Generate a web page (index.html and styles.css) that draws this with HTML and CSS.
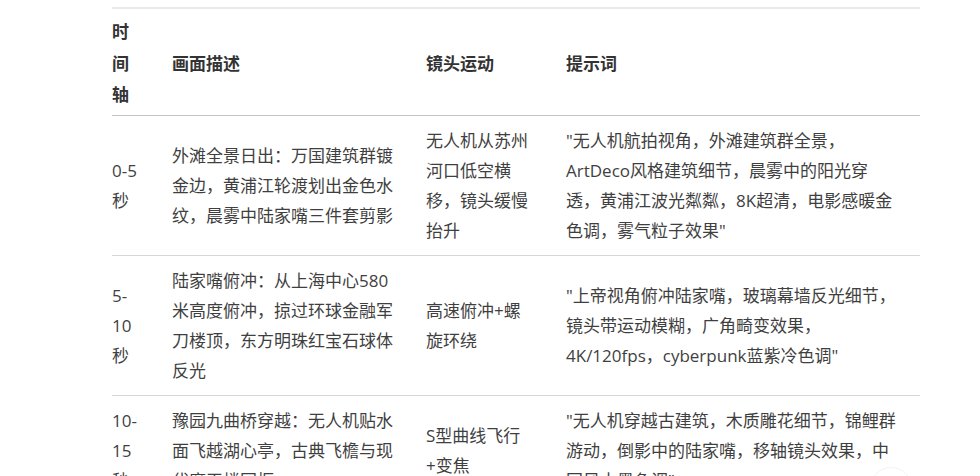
FILE: index.html
```html
<!DOCTYPE html>
<html lang="zh-CN">
<head>
  <meta charset="UTF-8">
  <meta name="viewport" content="width=device-width, initial-scale=1.0">
  <title>分镜脚本</title>
  <link rel="stylesheet" href="styles.css">
</head>
<body>
  <div class="page">
    <table class="shots">
      <thead>
        <tr>
          <th class="col-time">时间轴</th>
          <th class="col-desc">画面描述</th>
          <th class="col-cam">镜头运动</th>
          <th class="col-prompt">提示词</th>
        </tr>
      </thead>
      <tbody>
        <tr>
          <td class="col-time">0-5秒</td>
          <td class="col-desc">外滩全景日出：万国建筑群镀金边，黄浦江轮渡划出金色水纹，晨雾中陆家嘴三件套剪影</td>
          <td class="col-cam">无人机从苏州河口低空横移，镜头缓慢抬升</td>
          <td class="col-prompt">"无人机航拍视角，外滩建筑群全景，ArtDeco风格建筑细节，晨雾中的阳光穿透，黄浦江波光粼粼，8K超清，电影感暖金色调，雾气粒子效果"</td>
        </tr>
        <tr>
          <td class="col-time">5-10秒</td>
          <td class="col-desc">陆家嘴俯冲：从上海中心580米高度俯冲，掠过环球金融军刀楼顶，东方明珠红宝石球体反光</td>
          <td class="col-cam">高速俯冲+螺旋环绕</td>
          <td class="col-prompt">"上帝视角俯冲陆家嘴，玻璃幕墙反光细节，镜头带运动模糊，广角畸变效果，4K/120fps，cyberpunk蓝紫冷色调"</td>
        </tr>
        <tr>
          <td class="col-time">10-15秒</td>
          <td class="col-desc">豫园九曲桥穿越：无人机贴水面飞越湖心亭，古典飞檐与现代摩天楼同框</td>
          <td class="col-cam">S型曲线飞行+变焦</td>
          <td class="col-prompt">"无人机穿越古建筑，木质雕花细节，锦鲤群游动，倒影中的陆家嘴，移轴镜头效果，中国风水墨色调"</td>
        </tr>
      </tbody>
    </table>
  </div>
  <div class="float-btn"></div>
</body>
</html>
```

FILE: styles.css
```css
body {
  margin: 0;
  background: #fff;
  color: #3f3f3f;
  font-family: "Open Sans", "Noto Sans CJK SC", sans-serif;
  overflow: hidden;
}

.page {
  padding: 7px 0 0 112px;
}

.shots {
  width: 808px;
  border-collapse: collapse;
  table-layout: fixed;
  border-top: 2px solid #e9e9e9;
  font-size: 17px;
  line-height: 30px;
}

.shots th {
  text-align: left;
  font-weight: bold;
  color: #333;
  line-height: 31.5px;
  padding: 7px 13px 4px;
  border-bottom: 1px solid #c4c4c4;
}

.shots td {
  padding: 10px 13px 9px;
  vertical-align: middle;
  border-bottom: 1px solid #d6d6d6;
}

.shots .col-time {
  width: 32px;
  padding-left: 0;
  padding-right: 15px;
}

.shots .col-desc {
  width: 228px;
}

.shots .col-cam {
  width: 106px;
  padding-right: 21px;
}

.shots .col-prompt {
  width: 331px;
  padding-right: 23px;
}

.float-btn {
  position: absolute;
  left: 870px;
  top: 467px;
  width: 40px;
  height: 40px;
  border-radius: 50%;
  border: 1px solid #f3f3f3;
  background: #fff;
}
```
